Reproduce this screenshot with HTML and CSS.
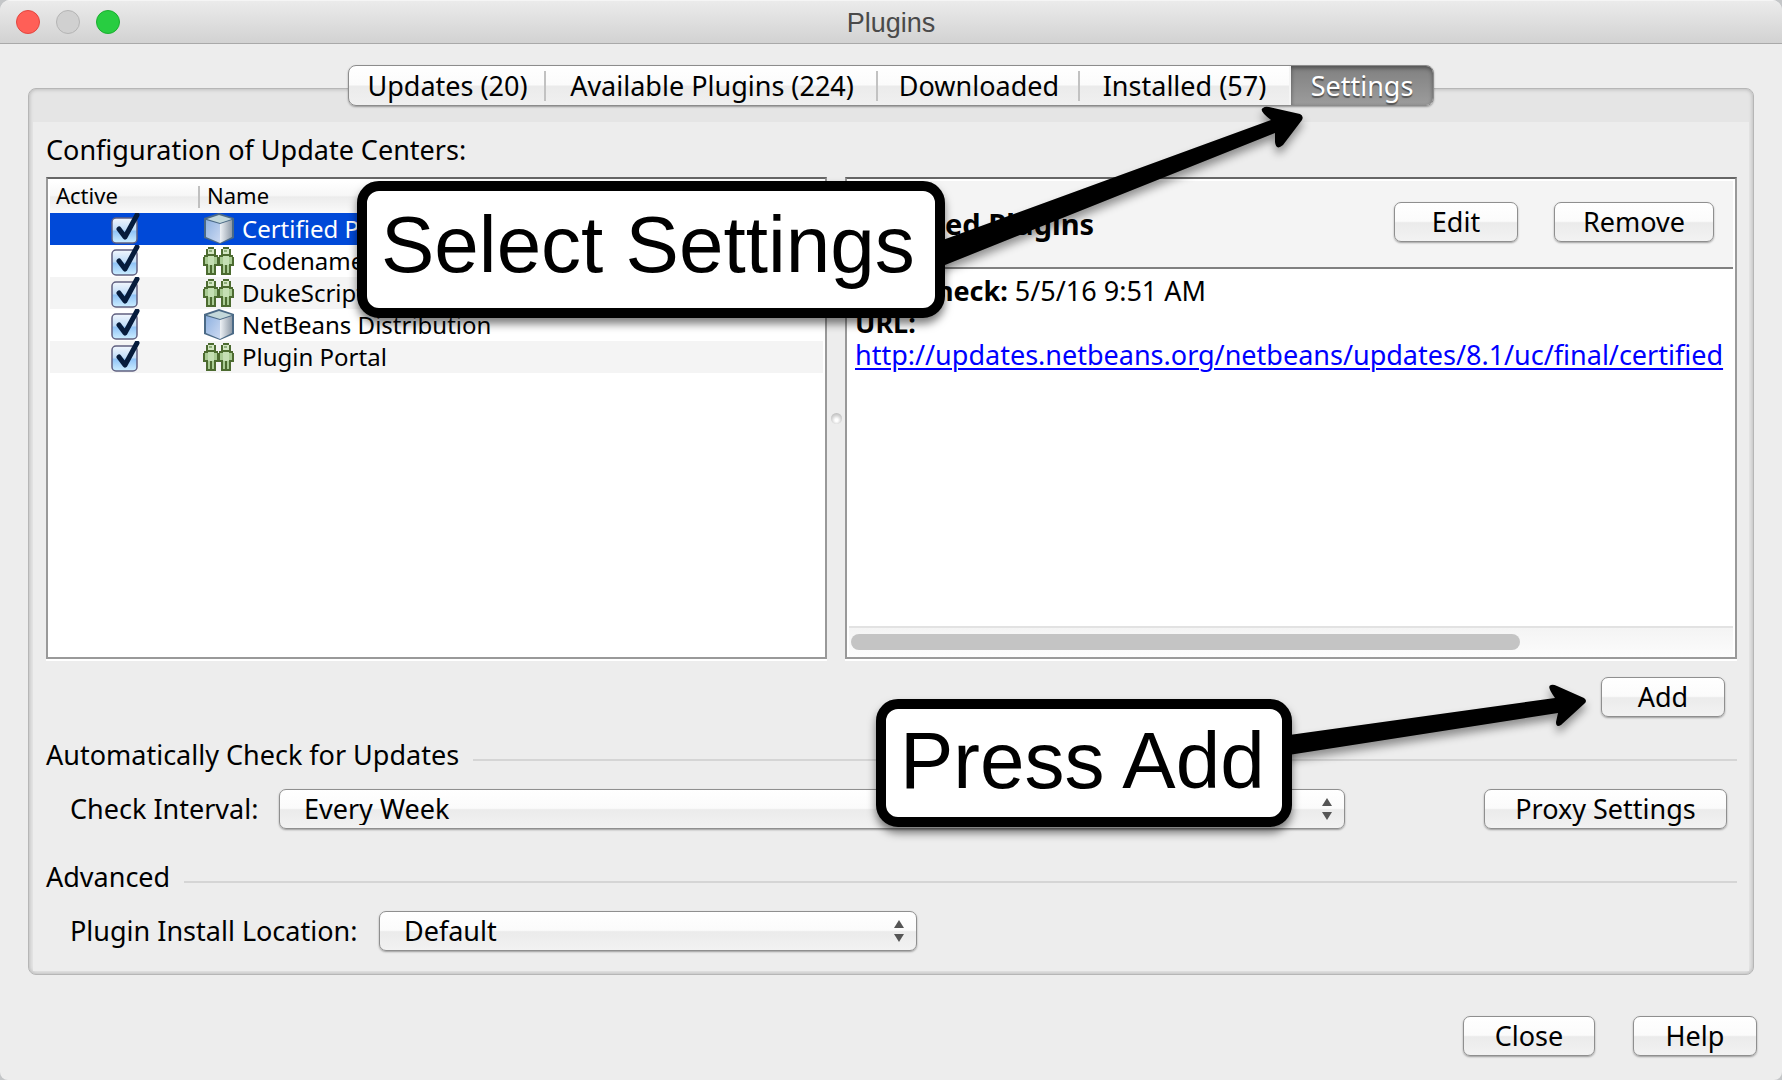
FILE: index.html
```html
<!DOCTYPE html>
<html lang="en">
<head>
<meta charset="utf-8">
<title>Plugins</title>
<link rel="stylesheet" href="styles.css">
</head>
<body>
<svg class="defs" aria-hidden="true">
  <defs>
    <linearGradient id="cube-left" x1="0" y1="0" x2="1" y2="1"><stop offset="0" stop-color="#8fb2e0"/><stop offset="1" stop-color="#cddaf2"/></linearGradient>
    <linearGradient id="cube-right" x1="0" y1="0" x2="1" y2="0"><stop offset="0" stop-color="#eef2f6"/><stop offset="1" stop-color="#8f9ba8"/></linearGradient>
    <symbol id="cube" viewBox="0 0 32 32">
      <path d="M2 5 17 0 32 5V25L18 31 2 25Z" fill="#4b6a86"/>
      <path d="M5 6 17 2 30 6 18 10Z" fill="#c3d8da"/>
      <path d="M4 7 18 11V30L4 24Z" fill="url(#cube-left)"/>
      <path d="M18 11 30 7V24L18 30Z" fill="url(#cube-right)"/>
    </symbol>
    <symbol id="people" viewBox="0 0 32 32">
      <g id="person">
        <path d="M6 2h6v2h2v6h2v2h1v9h-3v9H9v-2 2H4v-9H1v-9h1v-2h2V4h2z" fill="#4c6b30"/>
        <path d="M6 4h6v5H6z" fill="#d3e6c3"/>
        <path d="M7 5h3v2H7z" fill="#8fb07b"/>
        <path d="M3 12h3v7H3zM12 12h3v7h-3z" fill="#a9cb94"/>
        <path d="M6 11h6v9H6z" fill="#c4dfb3"/>
        <path d="M6 20h2v8H6zM10 20h2v8h-2z" fill="#a9cb94"/>
      </g>
      <use href="#person" x="15"/>
    </symbol>
  </defs>
</svg>
<div class="window">
  <header class="titlebar">
    <div class="lights">
      <button class="light light-close" aria-label="Close window"></button>
      <button class="light light-min" aria-label="Minimize window"></button>
      <button class="light light-zoom" aria-label="Zoom window"></button>
    </div>
    <h1 class="title">Plugins</h1>
  </header>

  <main class="content">
    <div class="tabs" role="tablist">
      <button class="tab" role="tab">Updates (20)</button>
      <button class="tab" role="tab">Available Plugins (224)</button>
      <button class="tab" role="tab">Downloaded</button>
      <button class="tab" role="tab">Installed (57)</button>
      <button class="tab tab-selected" role="tab" aria-selected="true">Settings</button>
    </div>

    <section class="panel">
      <div class="panel-body">
        <h2 class="label">Configuration of Update Centers:</h2>
        <div class="split">
          <div class="pane pane-list">
            <table class="centers">
              <thead><tr><th class="col-active">Active</th><th>Name</th></tr></thead>
              <tbody>
                <tr class="selected"><td class="col-active"><input class="check" type="checkbox" checked aria-label="Certified Plugins"></td><td><div class="name"><svg class="icon"><use href="#cube"/></svg>Certified Plugins</div></td></tr>
                <tr><td class="col-active"><input class="check" type="checkbox" checked aria-label="Codename One"></td><td><div class="name"><svg class="icon"><use href="#people"/></svg>Codename One</div></td></tr>
                <tr><td class="col-active"><input class="check" type="checkbox" checked aria-label="DukeScript"></td><td><div class="name"><svg class="icon"><use href="#people"/></svg>DukeScript</div></td></tr>
                <tr><td class="col-active"><input class="check" type="checkbox" checked aria-label="NetBeans Distribution"></td><td><div class="name"><svg class="icon"><use href="#cube"/></svg>NetBeans Distribution</div></td></tr>
                <tr><td class="col-active"><input class="check" type="checkbox" checked aria-label="Plugin Portal"></td><td><div class="name"><svg class="icon"><use href="#people"/></svg>Plugin Portal</div></td></tr>
              </tbody>
            </table>
          </div>
          <div class="divider"><span class="grip"></span></div>
          <div class="pane pane-detail">
            <div class="detail-head">
              <h3 class="detail-title">Certified Plugins</h3>
              <button class="btn btn-edit">Edit</button>
              <button class="btn btn-remove">Remove</button>
            </div>
            <div class="detail-text">
              <p><b>Last Check:</b> 5/5/16 9:51 AM</p>
              <p><b>URL:</b></p>
              <p><a href="#">http://updates.netbeans.org/netbeans/updates/8.1/uc/final/certified</a></p>
            </div>
            <div class="scrollbar"><div class="thumb"></div></div>
          </div>
        </div>
        <div class="add-row"><button class="btn btn-add">Add</button></div>

        <h2 class="label section">Automatically Check for Updates</h2>
        <div class="row">
          <label class="label interval-label" for="interval">Check Interval:</label>
          <select class="combo combo-wide" id="interval"><option>Every Week</option></select>
          <button class="btn btn-proxy">Proxy Settings</button>
        </div>

        <h2 class="label section">Advanced</h2>
        <div class="row">
          <label class="label location-label" for="location">Plugin Install Location:</label>
          <select class="combo combo-location" id="location"><option>Default</option></select>
        </div>
      </div>
    </section>

    <footer class="footer">
      <button class="btn btn-close">Close</button>
      <button class="btn btn-help">Help</button>
    </footer>
  </main>

  <svg class="arrow arrow-settings" viewBox="0 0 380 170" aria-hidden="true">
    <path d="M0 129 331 8Q318 -2 323 -4 325 -6 329 -5L360 2Q364 4 362 8L343 33Q336 39 335 30V21L0 155Z"/>
  </svg>
  <div class="callout callout-settings">Select Settings</div>
  <svg class="arrow arrow-add" viewBox="0 0 320 90" aria-hidden="true">
    <path d="M0 56 273 18Q264 6 269 5 271 4 275 6L302 18Q306 21 302 24L279 45Q274 48 274 42L276 33 0 76Z"/>
  </svg>
  <div class="callout callout-add">Press Add</div>
</div>
</body>
</html>
```
FILE: styles.css
```css
* { box-sizing: border-box; }
body {
  margin: 0;
  background: #c4c6c8;
  color: #000;
  font: 27px/32px "Noto Sans", "Open Sans", sans-serif;
}
h1, h2, h3, p { margin: 0; font-size: inherit; font-weight: normal; }
button, select { font: inherit; color: inherit; margin: 0; padding: 0; }
.defs { position: absolute; width: 0; height: 0; }

.window {
  position: relative;
  display: flex;
  flex-direction: column;
  min-height: 100vh;
  background: #ededed;
  border-radius: 10px 10px 8px 8px;
  overflow: hidden;
}

/* Title bar */
.titlebar {
  display: grid;
  grid-template-columns: 1fr auto 1fr;
  align-items: center;
  height: 44px;
  padding: 0 16px;
  background: linear-gradient(#ebebeb, #d2d2d2);
  border-bottom: 1px solid #a9a9a9;
  border-top: 1px solid #f5f5f5;
}
.lights { display: flex; gap: 16px; }
.light { width: 24px; height: 24px; border-radius: 50%; border: 1px solid; }
.light-close { background: #ff5f57; border-color: #e2463f; }
.light-min { background: #d0d0d0; border-color: #b4b4b4; }
.light-zoom { background: #28cd41; border-color: #1bae30; }
.title { padding-top: 2px; color: #4a4a4a; font: 27px/32px "Liberation Sans", Arial, sans-serif; }

/* Tabs */
.content {
  flex: 1;
  display: flex;
  flex-direction: column;
  padding: 21px 28px 24px;
}
.tabs {
  position: relative;
  z-index: 1;
  align-self: center;
  display: grid;
  grid-template-columns: 197px 332px 202px 211px 142px;
  height: 41px;
  margin-bottom: -18px;
  border: 1px solid #8c8c8c;
  border-radius: 8px;
  background: linear-gradient(#fff 0%, #fbfbfb 48%, #ebebeb 52%, #f0f0f0 100%);
  box-shadow: 0 1px 2px rgba(0, 0, 0, .35);
}
.tab {
  border: 0;
  background: linear-gradient(#c2c2c2, #c2c2c2) right center / 2px 30px no-repeat;
}
.tab:nth-child(4) { background: none; border-right: 2px solid #f4f4f4; }
.tab-selected {
  color: #fff;
  background: linear-gradient(#808080, #9c9c9c);
  border-radius: 0 7px 7px 0;
  box-shadow: inset 0 2px 4px rgba(0, 0, 0, .4);
  text-shadow: 0 2px 1px rgba(0, 0, 0, .45);
}

/* Tab panel */
.panel {
  flex: 1;
  display: flex;
  padding: 33px 4px 3px;
  border: 1px solid #b6b6b6;
  border-radius: 8px;
  background: #e5e5e5;
  box-shadow: inset 0 0 4px rgba(0, 0, 0, .25);
}
.panel-body {
  flex: 1;
  min-width: 0;
  display: flex;
  flex-direction: column;
  padding: 12px 12px 20px 13px;
  background: #ededed;
}
.split { flex: 1; display: flex; min-height: 300px; margin-top: 11px; }
.pane {
  min-width: 0;
  background: #fff;
  border: 2px solid #999;
  border-top-color: #666;
  box-shadow: 0 2px 0 #fff;
}
.pane-list { flex: 780; padding: 2px; }
.pane-detail { flex: 892; display: flex; flex-direction: column; padding: 2px 2px 0; }
.divider { width: 18px; display: flex; align-items: center; justify-content: center; }
.grip {
  width: 11px;
  height: 11px;
  border-radius: 50%;
  background: radial-gradient(circle at 50% 65%, #fff 15%, #d8d8d8 50%, #a8a8a8 100%);
}

/* Update centers table */
.centers { width: 100%; border-collapse: collapse; font-size: 24px; }
.centers th {
  height: 32px;
  padding: 0 0 4px 7px;
  text-align: left;
  font-size: 22px;
  line-height: 28px;
  font-weight: normal;
  background: linear-gradient(#fff 0%, #f7f7f7 45%, #ececec 50%, #fafafa 100%);
}
.centers th.col-active {
  width: 150px;
  padding-left: 6px;
  background:
    linear-gradient(#c0c0c0, #c0c0c0) right center / 2px 22px no-repeat,
    linear-gradient(#fff 0%, #f7f7f7 45%, #ececec 50%, #fafafa 100%);
}
.centers td { height: 32px; padding: 0; }
.centers td.col-active { text-align: center; }
.centers tbody tr:nth-child(odd) { background: #f4f4f4; }
.centers tbody tr.selected { background: #0049d8; color: #fff; }
.name { display: flex; align-items: center; gap: 8px; padding-left: 2px; }
.icon { width: 32px; height: 32px; }
.check {
  appearance: none;
  display: block;
  width: 32px;
  height: 32px;
  margin: 0 auto;
  background: url("data:image/svg+xml,%3Csvg xmlns='http://www.w3.org/2000/svg' viewBox='0 0 32 32'%3E%3ClinearGradient id='g' x2='0' y2='1'%3E%3Cstop stop-color='%23f2f7fd'/%3E%3Cstop offset='.48' stop-color='%23bfdcf8'/%3E%3Cstop offset='.52' stop-color='%238fc3f7'/%3E%3Cstop offset='1' stop-color='%23cdeeff'/%3E%3C/linearGradient%3E%3Crect x='3' y='5' width='25' height='25' rx='4' fill='url(%23g)' stroke='%23606080' stroke-width='1.5'/%3E%3Cpath d='M10 16 16 24 28 2' fill='none' stroke='%23061c3c' stroke-width='5' stroke-linecap='round' stroke-linejoin='round'/%3E%3C/svg%3E") center / 32px 32px no-repeat;
}

/* Detail pane */
.detail-head {
  display: flex;
  align-items: center;
  height: 88px;
  padding: 0 19px 4px 6px;
  background: #f4f4f4;
  border-bottom: 2px solid #808080;
}
.detail-title { flex: 1; padding-top: 4px; font-size: 29px; font-weight: bold; }
.detail-text { flex: 1; padding: 6px 0 0 6px; overflow: hidden; white-space: nowrap; }
.detail-text a { color: #00f; text-decoration-thickness: 2px; text-underline-offset: 3px; }
.scrollbar {
  height: 31px;
  padding: 6px 2px 0;
  border-top: 2px solid #e2e2e2;
  background: linear-gradient(#f4f4f4, #fcfcfc);
}
.thumb { width: 76%; height: 16px; border-radius: 8px; background: #c4c4c4; }

/* Buttons and combo boxes */
.btn, .combo {
  height: 40px;
  border: 1px solid #8f8f8f;
  border-radius: 7px;
  background: linear-gradient(#fff 0%, #fbfbfb 48%, #ebebeb 52%, #f2f2f2 100%);
  box-shadow: 0 1px 2px rgba(0, 0, 0, .35);
}
.btn-edit, .btn-add, .btn-help { width: 124px; }
.btn-edit { margin-right: 36px; }
.btn-remove { width: 160px; }
.btn-close { width: 132px; }
.btn-proxy { width: 243px; }
.add-row { display: flex; justify-content: flex-end; margin: 18px 0 22px; padding-right: 12px; }
.section { display: flex; gap: 14px; margin-bottom: 18px; }
.section::after { content: ""; flex: 1; height: 2px; margin-top: 20px; background: #d5d5d5; }
.row { display: flex; align-items: center; padding: 0 10px 0 24px; }
.row + .section { margin-top: 32px; }
.interval-label { width: 209px; }
.location-label { width: 309px; }
.combo {
  appearance: none;
  padding: 0 24px;
  background:
    url("data:image/svg+xml,%3Csvg xmlns='http://www.w3.org/2000/svg' viewBox='0 0 10 22'%3E%3Cpath d='M0 8 5 0 10 8ZM0 14H10L5 22Z' fill='%23555'/%3E%3C/svg%3E") right 12px center / 10px 22px no-repeat,
    linear-gradient(#fff 0%, #fbfbfb 48%, #ebebeb 52%, #f2f2f2 100%);
}
.combo-wide { flex: 1; margin-right: 139px; }
.combo-location { width: 538px; }
.footer { display: flex; justify-content: flex-end; gap: 38px; margin-top: 41px; margin-right: -3px; }

/* Annotations drawn over the window */
.callout {
  position: absolute;
  border: 10px solid #000;
  border-radius: 22px;
  background: #fff;
  box-shadow: 0 6px 9px rgba(0, 0, 0, .5);
  font: 80px/92px "Liberation Sans", Arial, sans-serif;
  white-space: nowrap;
  padding: 8px 0 0 14px;
}
.callout-settings { left: 357px; top: 181px; width: 588px; height: 137px; }
.callout-add { left: 876px; top: 699px; width: 416px; height: 128px; padding-top: 6px; }
.arrow { position: absolute; overflow: visible; filter: drop-shadow(0 6px 4px rgba(0, 0, 0, .4)); }
.arrow-settings { left: 940px; top: 112px; width: 380px; height: 170px; }
.arrow-add { left: 1282px; top: 680px; width: 320px; height: 90px; }
```
